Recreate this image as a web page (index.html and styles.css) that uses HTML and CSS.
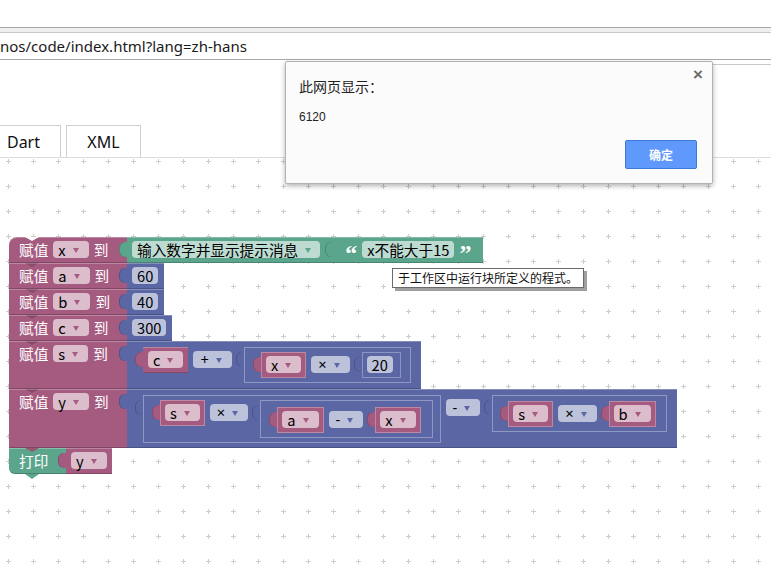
FILE: index.html
```html
<!DOCTYPE html>
<html lang="zh-Hans">
<head>
<meta charset="utf-8">
<title>Blockly code</title>
<link rel="stylesheet" href="styles.css">
</head>
<body>
<div class="page">
  <div class="topgap"></div>
  <div class="strip"></div>
  <div class="address">nos/code/index.html?lang=zh-hans</div>
  <div class="spacer"><div class="sideline"></div></div>
  <div class="tabs">
    <div class="tab">Dart</div>
    <div class="tab">XML</div>
  </div>
  <div class="workspace">
    <svg class="grid" width="100%" height="100%">
      <defs>
        <pattern id="dots" width="25" height="25" patternUnits="userSpaceOnUse">
          <path d="M6 3.5h5M8.5 1v5" stroke="#cdcdcd" stroke-width="1" fill="none"/>
        </pattern>
      </defs>
      <rect width="100%" height="100%" fill="url(#dots)"/>
    </svg>

    <div class="stack">
      <!-- row 1 -->
      <div class="row">
        <div class="set first"><span class="lbl">赋值</span><span class="f dd">x<i></i></span><span class="lbl">到</span></div>
        <div class="blk green tab-l prompt"><span class="f dd">输入数字并显示提示消息<i></i></span></div>
        <div class="blk green tab-l txt"><span class="q">“</span><span class="f">x不能大于15</span><span class="q">”</span></div>
      </div>
      <!-- row 2 -->
      <div class="row">
        <div class="set"><span class="lbl">赋值</span><span class="f dd">a<i></i></span><span class="lbl">到</span></div>
        <div class="blk blue tab-l num"><span class="f">60</span></div>
      </div>
      <!-- row 3 -->
      <div class="row">
        <div class="set"><span class="lbl">赋值</span><span class="f dd">b<i></i></span><span class="lbl">到</span></div>
        <div class="blk blue tab-l num"><span class="f">40</span></div>
      </div>
      <!-- row 4 -->
      <div class="row">
        <div class="set"><span class="lbl">赋值</span><span class="f dd">c<i></i></span><span class="lbl">到</span></div>
        <div class="blk blue tab-l num"><span class="f">300</span></div>
      </div>
      <!-- row 5 -->
      <div class="row">
        <div class="set"><span class="lbl">赋值</span><span class="f dd">s<i></i></span><span class="lbl">到</span></div>
        <div class="blk blue tab-l arith outer5">
          <div class="blk pink tab-l var"><span class="f dd">c<i></i></span></div>
          <span class="f dd opf">+<i></i></span>
          <div class="blk blue tab-l arith nest n5">
            <div class="blk pink tab-l var"><span class="f dd">x<i></i></span></div>
            <span class="f dd opf">×<i></i></span>
            <div class="blk blue tab-l num nestnum after-f"><span class="f">20</span></div>
          </div>
        </div>
      </div>
      <!-- row 6 -->
      <div class="row">
        <div class="set"><span class="lbl">赋值</span><span class="f dd">y<i></i></span><span class="lbl">到</span></div>
        <div class="blk blue tab-l arith outer6">
          <div class="blk blue tab-l arith nest nA">
            <div class="blk pink tab-l var"><span class="f dd">s<i></i></span></div>
            <span class="f dd opf">×<i></i></span>
            <div class="blk blue tab-l arith nest nAX after-f">
              <div class="blk pink tab-l var"><span class="f dd">a<i></i></span></div>
              <span class="f dd opf">-<i></i></span>
              <div class="blk pink tab-l var after-f"><span class="f dd">x<i></i></span></div>
            </div>
          </div>
          <span class="f dd opf">-<i></i></span>
          <div class="blk blue tab-l arith nest nB after-f">
            <div class="blk pink tab-l var"><span class="f dd">s<i></i></span></div>
            <span class="f dd opf">×<i></i></span>
            <div class="blk pink tab-l var after-f"><span class="f dd">b<i></i></span></div>
          </div>
        </div>
      </div>
      <!-- print -->
      <div class="row">
        <div class="print"><span class="lbl">打印</span></div>
        <div class="blk pink tab-l var pvar"><span class="f dd">y<i></i></span></div>
      </div>
    </div>

    <div class="tooltip">于工作区中运行块所定义的程式。</div>
  </div>

  <div class="dialog">
    <div class="close">×</div>
    <div class="dtitle">此网页显示：</div>
    <div class="dmsg">6120</div>
    <div class="dactions"><button class="ok">确定</button></div>
  </div>
</div>
</body>
</html>
```

FILE: styles.css
```css
* { box-sizing: border-box; }
html, body { margin: 0; padding: 0; background: #fff; }
body { font-family: "Noto Sans", "Noto Sans CJK SC", sans-serif; overflow: hidden; }
.page { position: relative; width: 771px; height: 569px; overflow: hidden; }

.topgap { height: 27px; }
.strip { height: 6px; border-top: 1px solid #a9a9a9; border-bottom: 1px solid #c6c6c6; background: #efefef; }
.address {
  height: 27px; border-bottom: 1px solid #a9a9a9;
  font-size: 15px; line-height: 26px; color: #1a1a1a; padding-left: 0;
  white-space: nowrap;
}
.spacer { height: 65px; position: relative; }
.sideline { position: absolute; left: 712px; right: 0; top: 4px; border-top: 1px solid #c8c8c8; }

.tabs { display: flex; gap: 5px; margin-left: -14px; height: 32px; }
.tab {
  width: 75px; height: 32px; border: 1px solid #cfcfcf; border-bottom: none;
  font-size: 16px; line-height: 32px; text-align: center; color: #111;
}

.workspace { position: relative; height: 412px; border-top: 1px solid #dcdcdc; }
.grid { position: absolute; left: 0; top: 0; }

/* ---------- blocks ---------- */
.stack {
  position: absolute; left: 9px; top: 79px;
  display: flex; flex-direction: column;
  font-family: "Noto Sans CJK SC", "Noto Sans", sans-serif; font-size: 14.67px;
}
.row { display: flex; align-items: stretch; }

.lbl { color: #fff; height: 17px; line-height: 17px; white-space: nowrap; }

.set, .print {
  position: relative; flex: none; display: flex; align-items: flex-start; gap: 5px;
  padding: 4px 0 0 10px;
  box-shadow: inset 0 1px rgba(255,255,255,.28), inset 0 -1px rgba(0,0,0,.22);
}
.set { width: 118px; background: #a55b80; --dk: #a55b80; }
.set::before {
  content: ""; position: absolute; left: 16px; top: 0;
  border-left: 7px solid transparent; border-right: 7px solid transparent;
  border-top: 4px solid rgba(0,0,0,.18);
}
.set.first { border-top-left-radius: 8px; }
.set.first::before { border-top-color: #fff; }

.print { width: 57px; height: 26px; background: #5ba58c; border-bottom-left-radius: 6px; }
.print::before {
  content: ""; position: absolute; left: 16px; top: 0;
  border-left: 7px solid transparent; border-right: 7px solid transparent;
  border-top: 4px solid #99576f;
}
.print::after {
  content: ""; position: absolute; left: 16px; bottom: -5px;
  border-left: 7px solid transparent; border-right: 7px solid transparent;
  border-top: 5px solid #5ba58c;
}

.blk {
  position: relative; display: flex; align-items: flex-start; gap: 5px; flex: none;
  box-shadow: inset 0 1px rgba(255,255,255,.25), inset 0 -1px rgba(0,0,0,.2);
}
.green { background: #5ba58c; --dk: #5ba58c; }
.blue { background: #5b67a5; --dk: #5b67a5; }
.pink { background: #a55b80; --dk: #a55b80; }

.tab-l::before {
  content: ""; position: absolute; left: -8px; top: 5px; width: 8px; height: 15px;
  background: var(--dk); border-radius: 6px 0 0 6px;
  box-shadow: inset 1px 0 rgba(0,0,0,.18);
}

.f {
  display: inline-flex; align-items: center; flex: none;
  height: 17px; line-height: 17px; padding: 0 5px; border-radius: 4px;
  background: rgba(255,255,255,.6); color: #000; white-space: nowrap;
}
.f.dd { padding-right: 10px; }
.f i {
  display: block; width: 0; height: 0; margin-left: 7px; margin-top: 1px;
  border-left: 3px solid transparent; border-right: 3px solid transparent;
  border-top: 5px solid var(--dk);
}

.prompt { padding: 4px 13px 5px 5px; height: 26px; }
.prompt .f.dd { padding-right: 9px; }
.txt { padding: 4px 12px 5px 12px; height: 26px; gap: 5px; }
.q { color: #fff; font-family: "Liberation Serif", serif; font-weight: bold; font-size: 24px; line-height: 24px; height: 17px; }

.num { padding: 4px 6px 5px 5px; }
.var { padding: 4px 5px 5px 5px; height: 26px; }
.opf { margin-top: 4px; font-family: "Noto Sans", sans-serif; padding-left: 7px; }
.after-f { margin-left: 7px; }

.outer5 { padding: 6px 10px 6px 16px; }
.outer6 { padding: 6px 10px 5px 16px; }
.nest { box-shadow: inset 0 0 0 1px rgba(255,255,255,.32); }
.n5 { margin-left: 7px; padding: 5px 10px 5px 17px; }
.nestnum { box-shadow: inset 0 0 0 1px rgba(255,255,255,.3); height: 26px; padding-right: 8px; }
.nA { padding: 5px 8px 5px 17px; }
.nAX { padding: 7px 12px 5px 17px; }
.nB { padding: 6px 11px 5px 16px; }
.var.after-f, .nest .var { box-shadow: inset 0 0 0 1px rgba(255,255,255,.28); }
.pvar { margin-left: 0; }

/* ---------- tooltip ---------- */
.tooltip {
  position: absolute; left: 392px; top: 110px;
  height: 20px; padding: 0 5px; line-height: 18px;
  background: #fff; border: 1px solid #6a6a6a;
  box-shadow: 3px 3px 0 #a0a0a0;
  font-family: "Noto Sans CJK SC", sans-serif; font-size: 12px; color: #111; white-space: nowrap;
}

/* ---------- alert dialog ---------- */
.dialog {
  position: absolute; left: 285px; top: 61px; width: 428px; height: 123px;
  background: #fbfbfb; border: 1px solid #b3b3b3; border-radius: 2px;
  box-shadow: 0 2px 5px rgba(0,0,0,.3);
  padding: 14px 15px 0 13px;
  font-family: "Noto Sans CJK SC", sans-serif; color: #222;
}
.close { position: absolute; right: 9px; top: 3px; font-family: "Liberation Sans", sans-serif; font-weight: bold; font-size: 17px; color: #6d6d6d; }
.dtitle { font-size: 14px; line-height: 20px; }
.dmsg { font-size: 12px; line-height: 16px; margin-top: 13px; font-family: "Liberation Sans", sans-serif; }
.dactions { display: flex; justify-content: flex-end; margin-top: 15px; }
.ok {
  width: 72px; height: 29px; border: 1px solid #3f79d8; border-radius: 2px;
  background: #5f99fb; color: #fff; font-weight: bold; font-size: 12px;
  font-family: "Noto Sans CJK SC", sans-serif; margin-right: 0;
}
```
